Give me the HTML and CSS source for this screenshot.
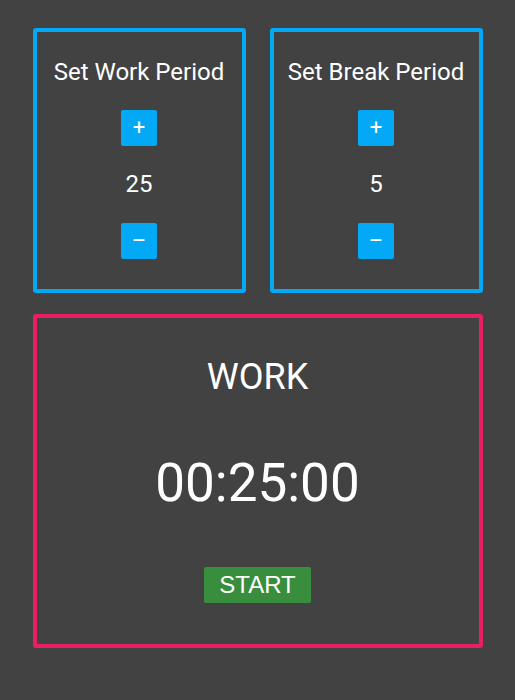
FILE: index.html
```html
<!DOCTYPE html>
<html lang="en">
<head>
<meta charset="utf-8">
<title>Pomodoro</title>
<link rel="stylesheet" href="styles.css">
</head>
<body>
<main class="app">
  <section class="settings">
    <div class="setter">
      <h2 class="setter-title">Set Work Period</h2>
      <button class="step-btn" type="button">+</button>
      <div class="setter-value">25</div>
      <button class="step-btn" type="button">&ndash;</button>
    </div>
    <div class="setter">
      <h2 class="setter-title">Set Break Period</h2>
      <button class="step-btn" type="button">+</button>
      <div class="setter-value">5</div>
      <button class="step-btn" type="button">&ndash;</button>
    </div>
  </section>
  <section class="timer">
    <h1 class="timer-label">WORK</h1>
    <div class="timer-clock">00:25:00</div>
    <button class="start-btn" type="button">START</button>
  </section>
</main>
</body>
</html>
```

FILE: styles.css
```css
html, body {
  margin: 0;
  padding: 0;
  background: #424242;
}

body {
  font-family: Roboto, "Noto Sans", sans-serif;
  color: #ffffff;
}

.app {
  width: 450px;
  margin: 0 auto;
  padding-top: 28px;
  display: flex;
  flex-direction: column;
  gap: 21px;
}

.settings {
  display: grid;
  grid-template-columns: 1fr 1fr;
  gap: 24px;
}

.setter {
  border: 4px solid #03a9f4;
  border-radius: 3px;
  padding: 26px 0 30px;
  display: flex;
  flex-direction: column;
  align-items: center;
  gap: 24px;
}

.setter-title {
  margin: 0;
  font-size: 24px;
  font-weight: 400;
  line-height: 28px;
}

.setter-value {
  font-size: 24px;
  line-height: 28px;
  margin-bottom: 1px;
}

.step-btn {
  width: 36px;
  height: 36px;
  padding: 0;
  border: none;
  border-radius: 2px;
  background: #03a9f4;
  color: #ffffff;
  font-family: Roboto, "Noto Sans", sans-serif;
  font-size: 22px;
  font-weight: 400;
  line-height: 36px;
  display: flex;
  align-items: center;
  justify-content: center;
}

.timer {
  border: 4px solid #e91e63;
  border-radius: 3px;
  padding: 38px 0 41px;
  display: flex;
  flex-direction: column;
  align-items: center;
}

.timer-label {
  margin: 0;
  font-size: 36px;
  font-weight: 400;
  line-height: 42px;
}

.timer-clock {
  margin-top: 53px;
  font-size: 53px;
  font-weight: 400;
  line-height: 64px;
}

.start-btn {
  margin-top: 52px;
  height: 36px;
  padding: 0 15px;
  border: none;
  border-radius: 2px;
  background: #388e3c;
  color: #ffffff;
  font-family: "Liberation Sans", Arial, sans-serif;
  font-size: 24px;
  line-height: 36px;
}
```
